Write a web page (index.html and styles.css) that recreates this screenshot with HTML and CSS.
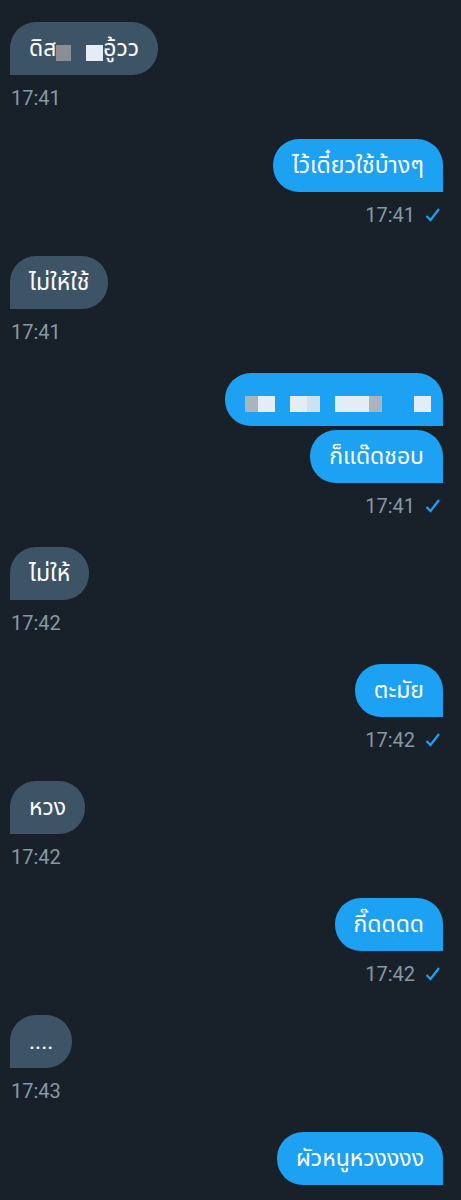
FILE: index.html
```html
<!DOCTYPE html>
<html lang="th">
<head>
<meta charset="utf-8">
<link rel="stylesheet" href="styles.css">
</head>
<body>
<div class="chat">
  <div class="group in">
    <div class="bubble">ดิส<span class="px px-g"></span><span class="gap"></span><span class="px px-w"></span>อู้วว</div>
    <div class="time">17:41</div>
  </div>
  <div class="group out">
    <div class="bubble">ไว้เดี๋ยวใช้บ้างๆ</div>
    <div class="time">17:41 <svg class="check" viewBox="0 0 16 16"><path d="M1.5 9 L5.5 13 L14 2" fill="none" stroke="currentColor" stroke-width="2.2"/></svg></div>
  </div>
  <div class="group in">
    <div class="bubble">ไม่ให้ใช้</div>
    <div class="time">17:41</div>
  </div>
  <div class="group out">
    <div class="bubble blur"><span class="px px-g2"></span><span class="px px-w"></span><span class="gap"></span><span class="px px-w"></span><span class="px px-w2"></span><span class="gap"></span><span class="px px-w"></span><span class="px px-w"></span><span class="px px-g2"></span><span class="gap2"></span><span class="px px-w"></span></div>
    <div class="bubble">ก็แด๊ดชอบ</div>
    <div class="time">17:41 <svg class="check" viewBox="0 0 16 16"><path d="M1.5 9 L5.5 13 L14 2" fill="none" stroke="currentColor" stroke-width="2.2"/></svg></div>
  </div>
  <div class="group in">
    <div class="bubble">ไม่ให้</div>
    <div class="time">17:42</div>
  </div>
  <div class="group out">
    <div class="bubble">ตะมัย</div>
    <div class="time">17:42 <svg class="check" viewBox="0 0 16 16"><path d="M1.5 9 L5.5 13 L14 2" fill="none" stroke="currentColor" stroke-width="2.2"/></svg></div>
  </div>
  <div class="group in">
    <div class="bubble">หวง</div>
    <div class="time">17:42</div>
  </div>
  <div class="group out">
    <div class="bubble">กี๊ดดดด</div>
    <div class="time">17:42 <svg class="check" viewBox="0 0 16 16"><path d="M1.5 9 L5.5 13 L14 2" fill="none" stroke="currentColor" stroke-width="2.2"/></svg></div>
  </div>
  <div class="group in">
    <div class="bubble">....</div>
    <div class="time">17:43</div>
  </div>
  <div class="group out">
    <div class="bubble">ผัวหนูหวงงงง</div>
  </div>
</div>
</body>
</html>
```

FILE: styles.css
```css
html, body {
  margin: 0;
  padding: 0;
  background: #18202a;
}
.chat {
  display: flex;
  flex-direction: column;
  padding: 22px 18px 0 10px;
  font-family: Roboto, "Noto Sans Thai", "Noto Sans", "DejaVu Sans", sans-serif;
}
.group {
  display: flex;
  flex-direction: column;
  gap: 4px;
  margin-bottom: 30px;
}
.group.in { align-items: flex-start; }
.group.out { align-items: flex-end; }
.bubble {
  font-size: 23px;
  line-height: 27px;
  height: 27px;
  padding: 13px 19px;
  color: #ffffff;
  border-radius: 26px;
  white-space: nowrap;
  display: flex;
  align-items: center;
}
.in .bubble {
  background: #3d5466;
  border-bottom-left-radius: 0;
}
.out .bubble {
  background: #1da1f2;
  border-bottom-right-radius: 0;
}
.time {
  margin-top: 8px;
  font-size: 20px;
  line-height: 22px;
  color: #8899a6;
  display: flex;
  align-items: center;
  gap: 10px;
  padding-left: 1px;
}
.out .time { padding-right: 2px; }
.check {
  width: 16px;
  height: 16px;
  color: #1da1f2;
}
.px {
  display: inline-block;
  width: 13px;
  height: 16px;
  margin-top: 8px;
}
.px-g { background: #8a8f94; width: 15px; }
.px-g2 { background: #a9b4bf; }
.px-w { background: #e4ecf4; width: 17px; }
.px-w2 { background: #cfe0ee; }
.gap { display: inline-block; width: 15px; }
.gap2 { display: inline-block; width: 32px; }
.bubble.blur { padding-left: 20px; padding-right: 12px; }
```
